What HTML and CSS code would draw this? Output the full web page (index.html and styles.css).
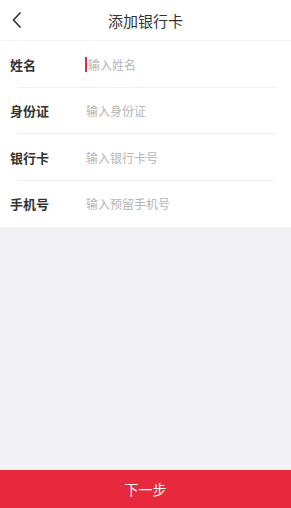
FILE: index.html
```html
<!DOCTYPE html>
<html lang="zh">
<head>
<meta charset="utf-8">
<link rel="stylesheet" href="styles.css">
</head>
<body>
<div class="page">
  <header class="topbar">
    <svg class="back" width="12" height="18" viewBox="0 0 12 18"><path d="M9.5 1.5 L2.5 9 L9.5 16.5" fill="none" stroke="#333" stroke-width="1.6"/></svg>
    <div class="title">添加银行卡</div>
  </header>
  <div class="form">
    <div class="row"><span class="label">姓名</span><span class="input"><span class="caret"></span>输入姓名</span></div>
    <div class="row"><span class="label">身份证</span><span class="input">输入身份证</span></div>
    <div class="row"><span class="label">银行卡</span><span class="input">输入银行卡号</span></div>
    <div class="row last"><span class="label">手机号</span><span class="input">输入预留手机号</span></div>
  </div>
  <div class="fill"></div>
  <div class="next">下一步</div>
</div>
</body>
</html>
```
FILE: styles.css
```css
html, body { margin: 0; padding: 0; }
body { font-family: "Noto Sans CJK SC", "Noto Sans", sans-serif; background: #f2f2f4; }
.page { width: 291px; height: 508px; display: flex; flex-direction: column; }
.topbar { height: 41px; background: #fff; border-bottom: 1px solid #f3f3f3; position: relative; display: flex; align-items: center; justify-content: center; box-sizing: border-box; }
.back { position: absolute; left: 11px; top: 11px; }
.title { font-size: 15px; color: #333; }
.form { background: #fff; }
.row { height: 46.5px; display: flex; align-items: center; position: relative; }
.row::after { content: ""; position: absolute; left: 17px; right: 15px; bottom: 0; height: 1px; background: #f0f0f0; }
.row.last::after { display: none; }
.label { width: 76px; padding-left: 10px; font-size: 13px; font-weight: bold; color: #333; }
.input { font-size: 12px; color: #b5b5b5; display: flex; align-items: center; }
.caret { width: 2px; height: 15px; background: #e8283c; margin-right: 1px; margin-left: -1px; }
.fill { flex: 1; background: #f2f2f4; }
.next { height: 38px; background: #e8283c; color: #fff; font-size: 14px; display: flex; align-items: center; justify-content: center; }
```
